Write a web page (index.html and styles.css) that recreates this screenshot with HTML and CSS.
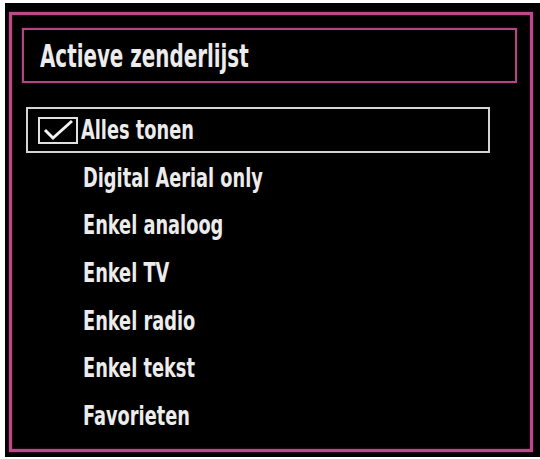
FILE: index.html
```html
<!DOCTYPE html>
<html>
  <head>
    <title>Actieve zenderlijst</title>
    <link rel="stylesheet" href="styles.css">
  </head>
  <body>
    <div class="scherm">
      <div class="kader">
        <div class="titel"><span>Actieve zenderlijst</span></div>
        <ul class="lijst">
          <li class="actief">
            <span class="vinkje">
              <svg width="36" height="23" viewBox="0 0 36 23">
                <polyline points="5,11 13,19 32,2" fill="none" stroke="#f2f2f2" stroke-width="3"/>
              </svg>
            </span>
            <span>Alles tonen</span>
          </li>
          <li><span>Digital Aerial only</span></li>
          <li><span>Enkel analoog</span></li>
          <li><span>Enkel TV</span></li>
          <li><span>Enkel radio</span></li>
          <li><span>Enkel tekst</span></li>
          <li><span>Favorieten</span></li>
        </ul>
      </div>
    </div>
  </body>
</html>
```

FILE: styles.css
```css
body {
  margin: 0;
  background-color: #FFF;
}
.scherm {
  margin: 3px 0 0 5px;
  width: 535px;
  height: 454px;
  box-sizing: border-box;
  padding: 9px 7px 5px 4px;
  background-color: #000;
}
.kader {
  height: 100%;
  box-sizing: border-box;
  border: 3px solid #bd4a88;
  box-shadow: 0 0 2px #7a2050, inset 0 0 2px #7a2050;
  padding: 13px 13px 0 10px;
  font-family: "DejaVu Sans", sans-serif;
  font-stretch: condensed;
  font-weight: bold;
  color: #ececec;
}
.titel {
  height: 55px;
  box-sizing: border-box;
  border: 2px solid #b04682;
  box-shadow: 0 0 2px #6a1c46;
  display: flex;
  align-items: center;
  padding-left: 16px;
  font-size: 32px;
}
.titel span {
  transform: scaleX(0.69);
}
.titel span,
.lijst span {
  display: inline-block;
  transform-origin: left center;
  white-space: nowrap;
}
.lijst {
  list-style: none;
  margin: 24px 0 0 4px;
  padding: 0;
  width: 464px;
  font-size: 26px;
}
.lijst span {
  transform: scaleX(0.76);
}
.lijst li {
  height: 46px;
  margin-bottom: 1.7px;
  box-sizing: border-box;
  display: flex;
  align-items: center;
  padding-left: 57px;
}
.lijst li.actief {
  border: 2px solid #d4d4d4;
  padding-left: 10px;
}
.vinkje {
  width: 40px;
  height: 27px;
  box-sizing: border-box;
  border: 2px solid #e0e0e0;
  margin-right: 3px;
  flex-shrink: 0;
}
.vinkje svg {
  display: block;
}
.lijst .vinkje {
  transform: none;
}
```
